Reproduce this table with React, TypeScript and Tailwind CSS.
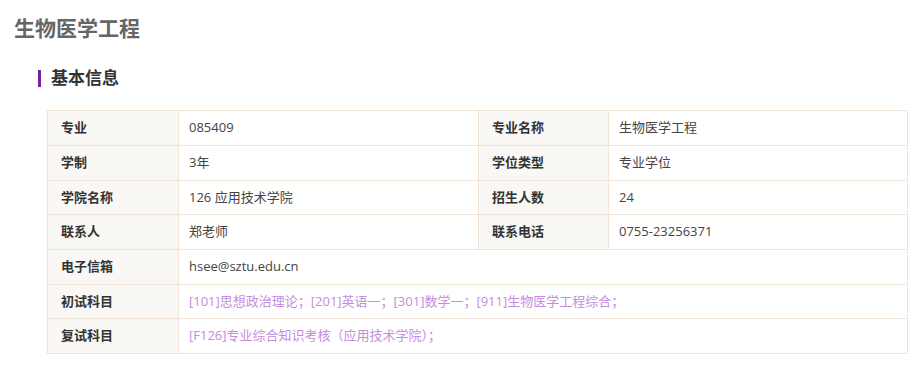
import React from 'react';

const font = { fontFamily: '"Segoe UI", "Open Sans", "Noto Sans CJK SC", sans-serif' };

export default function App() {
  const labelCls = 'bg-[#faf8f5] border border-[#f2e4d6] pl-[13px] font-bold text-[#333] text-[13px]';
  const valueCls = 'border border-[#f2e4d6] pl-[10px] text-[#444] text-[13px]';
  const linkCls = 'text-[#c48de0]';

  return (
    <div className="min-h-screen bg-white" style={font}>
      <h1 className="pl-[14px] pt-[13px] text-[21px] leading-[30px] font-bold text-[#666]">生物医学工程</h1>

      {/* 基本信息 */}
      <div className="mt-[25px] ml-[38px] flex items-center h-[20px]">
        <span className="w-[3px] h-[17px] bg-[#7b1fa2]" />
        <h2 className="ml-[10px] text-[17px] font-bold text-[#333]">基本信息</h2>
      </div>

      <table className="mt-[22px] ml-[47px] w-[860px] border-collapse table-fixed">
        <colgroup>
          <col className="w-[131px]" />
          <col className="w-[300px]" />
          <col className="w-[130px]" />
          <col className="w-[299px]" />
        </colgroup>
        <tbody>
          <tr className="h-[35px]">
            <td className={labelCls}>专业</td>
            <td className={valueCls}>085409</td>
            <td className={labelCls}>专业名称</td>
            <td className={valueCls}>生物医学工程</td>
          </tr>
          <tr className="h-[35px]">
            <td className={labelCls}>学制</td>
            <td className={valueCls}>3年</td>
            <td className={labelCls}>学位类型</td>
            <td className={valueCls}>专业学位</td>
          </tr>
          <tr className="h-[34px]">
            <td className={labelCls}>学院名称</td>
            <td className={valueCls}>126 应用技术学院</td>
            <td className={labelCls}>招生人数</td>
            <td className={valueCls}>24</td>
          </tr>
          <tr className="h-[35px]">
            <td className={labelCls}>联系人</td>
            <td className={valueCls}>郑老师</td>
            <td className={labelCls}>联系电话</td>
            <td className={valueCls}>0755-23256371</td>
          </tr>
          <tr className="h-[35px]">
            <td className={labelCls}>电子信箱</td>
            <td className={valueCls} colSpan={3}>hsee@sztu.edu.cn</td>
          </tr>
          <tr className="h-[34px]">
            <td className={labelCls}>初试科目</td>
            <td className={valueCls} colSpan={3}>
              <span className={linkCls}>[101]思想政治理论；[201]英语一；[301]数学一；[911]生物医学工程综合；</span>
            </td>
          </tr>
          <tr className="h-[35px]">
            <td className={labelCls}>复试科目</td>
            <td className={valueCls} colSpan={3}>
              <span className={linkCls}>[F126]专业综合知识考核（应用技术学院）；</span>
            </td>
          </tr>
        </tbody>
      </table>
    </div>
  );
}
